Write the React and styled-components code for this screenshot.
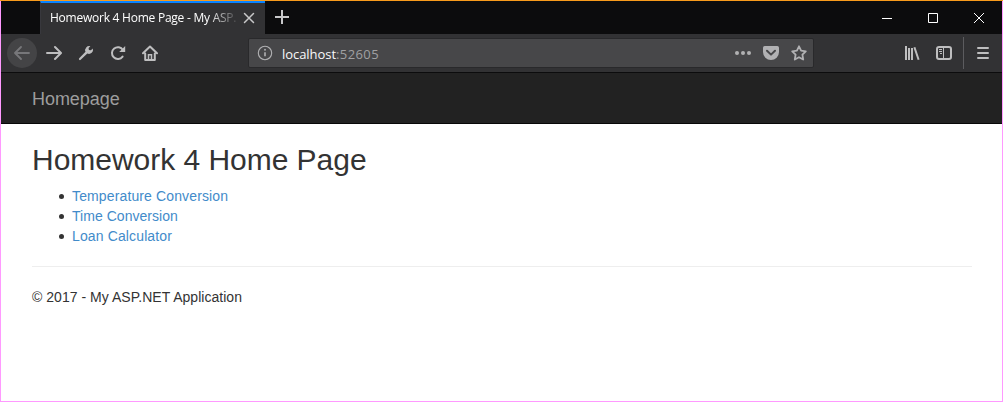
import React from 'react';
import styled, { createGlobalStyle } from 'styled-components';

const GlobalStyle = createGlobalStyle`
  * { box-sizing: border-box; }
  body { margin: 0; background: #fff; }
`;

const BrowserWindow = styled.div`
  display: flex;
  flex-direction: column;
  width: 1003px;
  height: 402px;
  overflow: hidden;
  background: linear-gradient(#f89b1c, #f89b1c) top / 100% 1px no-repeat, #ff99ff;
  padding: 1px;
`;

const TabStrip = styled.div`
  display: flex;
  flex: none;
  height: 33px;
  padding-left: 39px;
  background: #0c0c0d;
  font-family: 'Open Sans', 'Noto Sans', sans-serif;
`;

const Tab = styled.div`
  display: flex;
  align-items: center;
  width: 225px;
  padding: 0 10px 2px 9px;
  border-top: 2px solid #0a84ff;
  border-left: 1px solid #38383d;
  background: #323234;
`;

const TabTitle = styled.span`
  flex: none;
  width: 187px;
  margin-right: 6px;
  overflow: hidden;
  white-space: nowrap;
  font-size: 12px;
  font-weight: 500;
  line-height: 18px;
  letter-spacing: -0.24px;
  color: #fff;
  mask-image: linear-gradient(to right, #000 158px, transparent 190px);
`;

const NewTab = styled.div`
  display: flex;
  align-items: center;
  margin-left: 9px;
  padding-bottom: 1px;
`;

const WindowControls = styled.div`
  display: flex;
  margin-left: auto;
`;

const Control = styled.div`
  display: flex;
  align-items: center;
  justify-content: center;
  width: 46px;
`;

const Toolbar = styled.div`
  display: flex;
  align-items: center;
  flex: none;
  height: 39px;
  padding: 0 11px 0 6px;
  background: #323234;
  border-bottom: 1px solid #0c0c0d;
`;

const BackButton = styled.div`
  display: flex;
  align-items: center;
  justify-content: center;
  width: 30px;
  height: 30px;
  border-radius: 50%;
  background: #444446;
`;

const ToolButton = styled.div`
  display: flex;
  width: 16px;
  margin-left: ${(p) => p.$gap ?? 16}px;
`;

const ToolGroup = styled.div`
  display: flex;
  align-items: center;
  margin-left: auto;
`;

const AddressBar = styled.div`
  display: flex;
  align-items: center;
  width: 566px;
  height: 30px;
  margin-left: 90px;
  padding: 0 6px 0 8px;
  border: 1px solid #29292b;
  border-radius: 2px;
  background: #474749;
`;

const Address = styled.span`
  margin: 1px auto 0 9px;
  font-family: 'Open Sans', 'Noto Sans', sans-serif;
  font-size: 13px;
  font-weight: 500;
  line-height: 18px;
  letter-spacing: -0.05px;
  color: #f9f9fa;
`;

const Port = styled.span`
  font-weight: 400;
  letter-spacing: 0.4px;
  color: #a0a0a2;
`;

const Separator = styled.div`
  width: 1px;
  height: 32px;
  margin-left: 11px;
  background: #5c5c5f;
`;

const Navbar = styled.nav`
  flex: none;
  height: 51px;
  padding: 16px 31px 14px;
  background: #222;
  border-bottom: 1px solid #080808;
  font: 18px/20px 'Liberation Sans', Arial, sans-serif;
  letter-spacing: -0.05px;
  color: #9d9d9d;
`;

const Page = styled.main`
  flex: 1;
  padding: 0 30px 0 31px;
  background: #fff;
  font: 14px/20px 'Liberation Sans', Arial, sans-serif;
  color: #333;
`;

const Heading = styled.h2`
  margin: 19px 0 10px;
  font-size: 30px;
  font-weight: 500;
  line-height: 33px;
  letter-spacing: -0.03px;
`;

const Links = styled.ul`
  margin: 0 0 10px;
  padding-left: 27px;
  list-style: none;
`;

const LinkItem = styled.li`
  display: flex;
  height: 20px;

  &::before {
    content: '';
    width: 5px;
    height: 5px;
    margin: 8px 8px 0 0;
    border-radius: 50%;
    background: #333;
  }
`;

const PageLink = styled.a`
  letter-spacing: ${(p) => p.$tracking}px;
  color: #428bca;
  text-decoration: none;
`;

const Rule = styled.hr`
  margin: 20px 0;
  border: 0;
  border-top: 1px solid #eee;
`;

const Footer = styled.p`
  margin: 0;
  letter-spacing: 0.03px;
`;

const Icon = ({ size = 16, color = '#bebebf', children, ...rest }) => (
  <svg width={size} height={size} viewBox="0 0 16 16" fill="none" stroke={color}
    strokeWidth="2" strokeLinecap="round" strokeLinejoin="round" {...rest}>
    {children}
  </svg>
);

const BackIcon = () => (
  <Icon color="#77777a" strokeWidth="1.8"><path d="M15 8H1.2M7 2 1 8l6 6" /></Icon>
);
const ForwardIcon = () => (
  <Icon><path d="M1 8h13.8M9 2l6 6-6 6" /></Icon>
);
const WrenchIcon = () => (
  <Icon fill="#bebebf" stroke="none">
    <path d="M14.8 3.4 12.9 5.3 10.9 5.1 10.6 3.1 12.4 1.2A4.1 4.1 0 0 0 7.5 6.7L1.2 13.3A1.05 1.05 0 0 0 2.7 14.8L9.3 8.5A4.1 4.1 0 0 0 14.8 3.4Z" />
  </Icon>
);
const ReloadIcon = () => (
  <Icon>
    <path d="M12.6 11.6A5.9 5.9 0 1 1 12.9 5" />
    <path d="M15.2 1v6h-6Z" fill="#bebebf" stroke="none" />
  </Icon>
);
const HomeIcon = () => (
  <Icon>
    <path d="M1 8.3 8 1.5l7 6.8M3.2 8.5V15h9.6V8.5" />
    <path d="M6.5 14.5V9.8h3v4.7" strokeWidth="1.5" strokeLinejoin="miter" />
  </Icon>
);
const InfoIcon = () => (
  <Icon color="#b1b1b3" strokeWidth="1.1">
    <circle cx="8" cy="8" r="6.7" />
    <path d="M8 7.3v4" strokeWidth="1.6" strokeLinecap="butt" />
    <circle cx="8" cy="4.8" r=".95" fill="#b1b1b3" stroke="none" />
  </Icon>
);
const DotsIcon = () => (
  <Icon fill="#b1b1b3" stroke="none">
    <circle cx="2" cy="8" r="2" /><circle cx="8" cy="8" r="2" /><circle cx="14" cy="8" r="2" />
  </Icon>
);
const PocketIcon = () => (
  <Icon>
    <path d="M1.7 1h12.6A1.7 1.7 0 0 1 16 2.7V7A8 8 0 0 1 0 7V2.7A1.7 1.7 0 0 1 1.7 1Z" fill="#b1b1b3" stroke="none" />
    <path d="M4 5.8l4 3.8 4-3.8" stroke="#474749" />
  </Icon>
);
const StarIcon = () => (
  <Icon color="#b1b1b3" strokeWidth="1.8">
    <path d="M8 1.3l2.1 4.3 4.7.7-3.4 3.3.8 4.9L8 12.2l-4.2 2.3.8-4.9L1.2 6.3l4.7-.7Z" />
  </Icon>
);
const LibraryIcon = () => (
  <Icon strokeLinecap="butt">
    <path d="M2 1v14M5 3v12M8 3v12M10.4 2.3 14.6 14.7" />
  </Icon>
);
const SidebarIcon = () => (
  <Icon>
    <rect x="1" y="2" width="14" height="12" rx="2" />
    <path d="M7.5 2v12" strokeWidth="1" />
    <path d="M3 4.5h3M3 6.5h3M4 8.5h2" strokeWidth="1" strokeLinecap="butt" />
  </Icon>
);
const MenuIcon = () => (
  <Icon><path d="M3 3h10M3 8h10M3 13h10" /></Icon>
);

const links = [
  { label: 'Temperature Conversion', tracking: 0.13 },
  { label: 'Time Conversion', tracking: 0.04 },
  { label: 'Loan Calculator', tracking: 0.13 },
];

export default function App() {
  return (
    <>
      <GlobalStyle />
      <BrowserWindow>
        <TabStrip>
          <Tab>
            <TabTitle>Homework 4 Home Page - My ASP.</TabTitle>
            <Icon size={12} color="#c8c8c9"><path d="M2 2l12 12M14 2L2 14" /></Icon>
          </Tab>
          <NewTab>
            <Icon color="#c8c8c9" strokeLinecap="butt"><path d="M8 1v14M1 8h14" /></Icon>
          </NewTab>
          <WindowControls>
            <Control>
              <svg width="10" height="10"><path d="M0 5.5h10" stroke="#fff" /></svg>
            </Control>
            <Control>
              <svg width="10" height="10"><path d="M.5.5h9v9h-9Z" fill="none" stroke="#fff" /></svg>
            </Control>
            <Control>
              <svg width="10" height="10"><path d="M0 0l10 10M10 0L0 10" stroke="#fff" /></svg>
            </Control>
          </WindowControls>
        </TabStrip>
        <Toolbar>
          <BackButton><BackIcon /></BackButton>
          <ToolButton $gap={9}><ForwardIcon /></ToolButton>
          <ToolButton><WrenchIcon /></ToolButton>
          <ToolButton><ReloadIcon /></ToolButton>
          <ToolButton><HomeIcon /></ToolButton>
          <AddressBar>
            <InfoIcon />
            <Address>localhost<Port>:52605</Port></Address>
            <DotsIcon />
            <ToolButton $gap={12}><PocketIcon /></ToolButton>
            <ToolButton $gap={12}><StarIcon /></ToolButton>
          </AddressBar>
          <ToolGroup>
            <ToolButton $gap={0}><LibraryIcon /></ToolButton>
            <ToolButton><SidebarIcon /></ToolButton>
            <Separator />
            <ToolButton $gap={11}><MenuIcon /></ToolButton>
          </ToolGroup>
        </Toolbar>
        <Navbar>Homepage</Navbar>
        <Page>
          <Heading>Homework 4 Home Page</Heading>
          <Links>
            {links.map(({ label, tracking }) => (
              <LinkItem key={label}><PageLink $tracking={tracking}>{label}</PageLink></LinkItem>
            ))}
          </Links>
          <Rule />
          <Footer>© 2017 - My ASP.NET Application</Footer>
        </Page>
      </BrowserWindow>
    </>
  );
}
